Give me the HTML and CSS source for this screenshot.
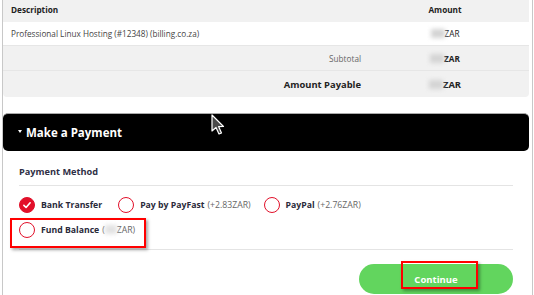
FILE: index.html
```html
<!DOCTYPE html>
<html lang="en">
<head>
    <meta charset="UTF-8">
    <meta name="viewport" content="width=device-width, initial-scale=1.0">
    <title>Checkout</title>
    <link rel="stylesheet" href="styles.css">
</head>
<body>
    <div class="page">
        <div class="invoice">
            <div class="row head">
                <div class="desc">Description</div>
                <div class="amount">Amount</div>
            </div>
            <div class="row item">
                <div class="desc">Professional Linux Hosting (#12348) (billing.co.za)</div>
                <div class="amount"><span class="blur"></span>ZAR</div>
            </div>
            <div class="row sub">
                <div class="label">Subtotal</div>
                <div class="amount bold"><span class="blur"></span>ZAR</div>
            </div>
            <div class="row total">
                <div class="label bold">Amount Payable</div>
                <div class="amount bold"><span class="blur"></span>ZAR</div>
            </div>
        </div>

        <div class="panel-head">
            <span class="caret"></span> Make a Payment
        </div>

        <div class="panel-body">
            <h3>Payment Method</h3>
            <div class="methods">
                <label class="method">
                    <span class="radio checked">
                        <svg viewBox="0 0 16 16" width="10" height="10"><path d="M3 8.5 L6.5 12 L13 4.5" fill="none" stroke="#fff" stroke-width="2.6" stroke-linecap="round" stroke-linejoin="round"/></svg>
                    </span>
                    <b>Bank Transfer</b>
                </label>
                <label class="method">
                    <span class="radio"></span>
                    <b>Pay by PayFast</b> <span class="fee">(+2.83ZAR)</span>
                </label>
                <label class="method">
                    <span class="radio"></span>
                    <b>PayPal</b> <span class="fee">(+2.76ZAR)</span>
                </label>
                <label class="method wide">
                    <span class="radio"></span>
                    <b>Fund Balance</b> <span class="fee">(<span class="blur small"></span>ZAR)</span>
                </label>
                <div class="mark mark-fund"></div>
            </div>
            <div class="actions">
                <button class="btn-continue">Continue</button>
                <div class="mark mark-btn"></div>
            </div>
        </div>

        <svg class="cursor" width="14" height="22" viewBox="0 0 14 22">
            <path d="M1 1 L1 17 L5 13.5 L8 20 L10.5 19 L7.6 12.6 L12.5 12.5 Z" fill="#4a4a4a" stroke="#fff" stroke-width="1.2" stroke-linejoin="round"/>
        </svg>
    </div>
</body>
</html>
```

FILE: styles.css
```css
body {
    margin: 0;
    font-family: "Open Sans", Arial, sans-serif;
    background: #fff;
}
.page {
    position: relative;
    margin: 0 1px 0 2px;
    height: 295px;
    border-left: 1px solid #c8c8c8;
    border-right: 1px solid #c8c8c8;
    box-sizing: border-box;
    padding-right: 3px;
}
.invoice {
    background: #f1f1f1;
    border-radius: 0 0 4px 4px;
    font-size: 8.2px;
    color: #333;
}
.row {
    display: grid;
    grid-template-columns: 1fr 168px;
    align-items: center;
}
.row.head {
    height: 22px;
    padding-bottom: 4px;
    box-sizing: border-box;
    font-weight: bold;
    color: #222;
}
.row.item {
    height: 23px;
    background: #fff;
    color: #444;
    border-bottom: 1px solid #e6e6e6;
}
.row.sub {
    height: 24px;
    border-bottom: 1px solid #e6e6e6;
}
.row.total {
    height: 26px;
    font-size: 9.4px;
}
.desc {
    padding-left: 8px;
}
.label {
    text-align: right;
    color: #666;
}
.label.bold {
    color: #222;
    font-weight: bold;
}
.amount {
    text-align: center;
    color: #222;
}
.amount.bold {
    font-weight: bold;
}
.blur {
    display: inline-block;
    width: 14px;
    height: 9px;
    vertical-align: -1px;
    background: #d4d4d4;
    filter: blur(2px);
}
.blur.small {
    width: 12px;
    background: #e2e2e2;
}
.panel-head {
    margin-top: 16px;
    height: 37px;
    background: #000;
    border-top: 1px solid #aaa;
    border-radius: 5px;
    color: #fff;
    font-weight: bold;
    font-size: 11.5px;
    display: flex;
    align-items: center;
    padding-left: 15px;
}
.caret {
    display: inline-block;
    border-left: 2.5px solid transparent;
    border-right: 2.5px solid transparent;
    border-top: 3px solid #fff;
    margin-right: 4px;
    margin-top: -2px;
}
.panel-body {
    padding: 0 16px;
}
.panel-body h3 {
    margin: 0;
    padding: 14px 0 7px;
    font-size: 9.2px;
    color: #2f2f45;
    border-bottom: 1px solid #e4e4e4;
}
.methods {
    position: relative;
    display: flex;
    flex-wrap: wrap;
    padding: 6px 0 7px;
    border-bottom: 1px solid #e4e4e4;
}
.method {
    display: flex;
    align-items: center;
    height: 25px;
    margin-right: 13px;
    font-size: 8.7px;
    color: #2a2a3a;
}
.method.wide {
    flex-basis: 100%;
}
.method b {
    margin-right: 3px;
}
.fee {
    color: #666;
}
.radio {
    width: 14px;
    height: 14px;
    border: 1.5px solid #e2102a;
    border-radius: 50%;
    margin-right: 6px;
    display: flex;
    align-items: center;
    justify-content: center;
    flex-shrink: 0;
}
.radio.checked {
    background: #e2102a;
}
.actions {
    position: relative;
    display: flex;
    justify-content: flex-end;
    padding-top: 14px;
}
.btn-continue {
    width: 154px;
    height: 30px;
    border: none;
    border-radius: 15px;
    background: #62d55e;
    color: #fff;
    font-family: inherit;
    font-weight: bold;
    font-size: 9.5px;
}
.mark {
    position: absolute;
    border: 2px solid #f00;
    box-shadow: 2px 2px 3px rgba(0, 0, 0, 0.35);
}
.mark-fund {
    left: -9px;
    top: 32px;
    width: 132px;
    height: 26px;
}
.mark-btn {
    right: 35px;
    top: 11px;
    width: 73px;
    height: 24px;
}
.cursor {
    position: absolute;
    left: 208px;
    top: 114px;
}
```
